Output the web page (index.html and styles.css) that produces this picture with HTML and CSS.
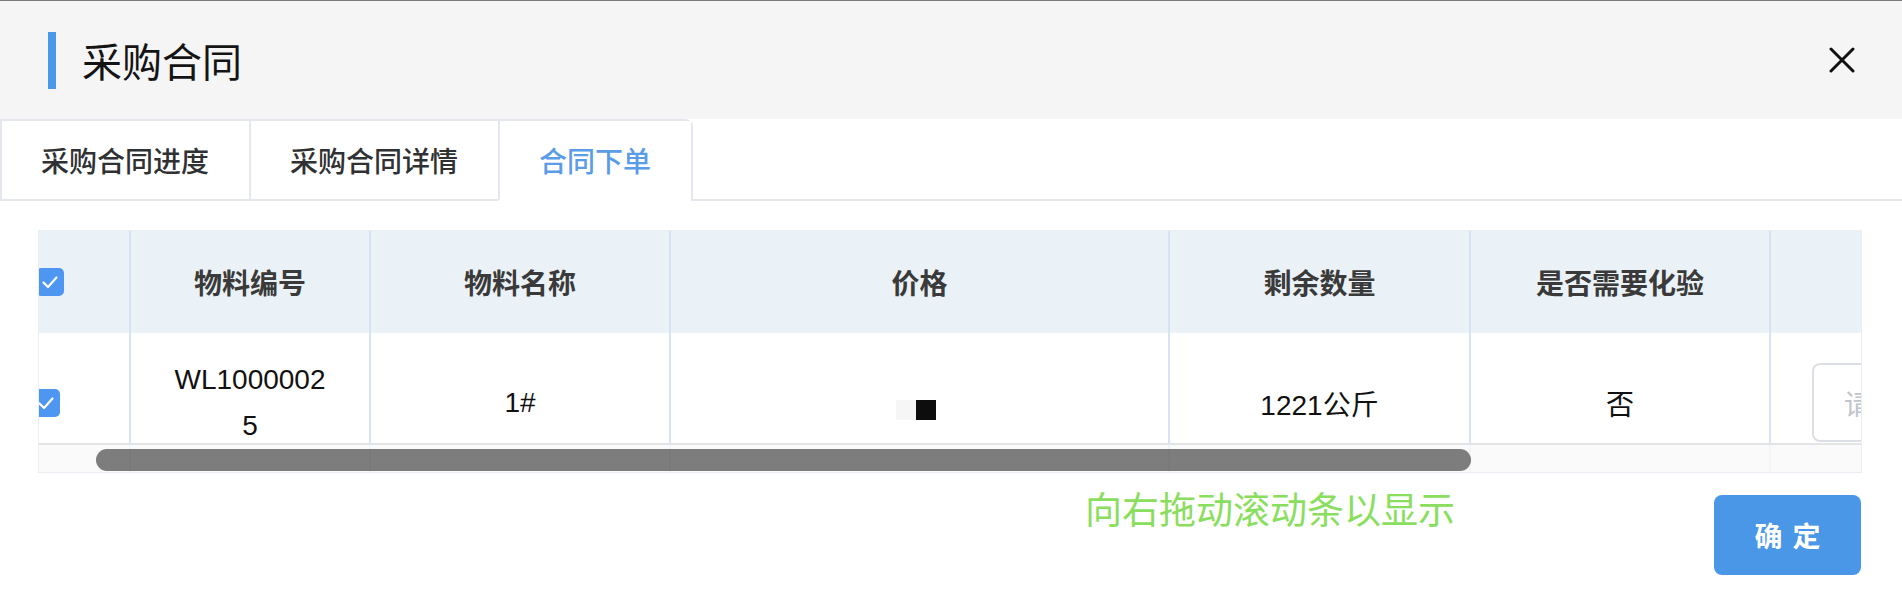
FILE: index.html
```html
<!DOCTYPE html>
<html lang="zh-CN">
<head>
<meta charset="utf-8">
<title>采购合同</title>
<link rel="stylesheet" href="styles.css">
</head>
<body>
<header class="dlg-head">
  <span class="bar"></span>
  <h1 class="title">采购合同</h1>
  <button class="close" aria-label="关闭">
    <svg width="26" height="26" viewBox="0 0 26 26"><path d="M2 2 L24 24 M24 2 L2 24" stroke="#111" stroke-width="3" stroke-linecap="round" fill="none"/></svg>
  </button>
</header>
<nav class="tabs">
  <div class="tab-group">
    <div class="tab">采购合同进度</div>
    <div class="tab">采购合同详情</div>
    <div class="tab active">合同下单</div>
  </div>
</nav>
<section class="table-wrap">
  <div class="grid">
    <div class="th first"><span class="cb cb-head"><svg width="28" height="28" viewBox="0 0 28 28"><path d="M7.5 14.5 L12 19 L20.5 9.5" stroke="#fff" stroke-width="2.2" fill="none" stroke-linecap="round" stroke-linejoin="round"/></svg></span></div>
    <div class="th">物料编号</div>
    <div class="th">物料名称</div>
    <div class="th">价格</div>
    <div class="th">剩余数量</div>
    <div class="th">是否需要化验</div>
    <div class="th"></div>

    <div class="td first"><span class="cb cb-body"><svg width="28" height="28" viewBox="0 0 28 28"><path d="M7.5 14.5 L12 19 L20.5 9.5" stroke="#fff" stroke-width="2.2" fill="none" stroke-linecap="round" stroke-linejoin="round"/></svg></span></div>
    <div class="td"><div class="code">WL10000025</div></div>
    <div class="td">1#</div>
    <div class="td"><span class="pix pix-light"></span><span class="pix pix-dark"></span></div>
    <div class="td">1221公斤</div>
    <div class="td">否</div>
    <div class="td last"><div class="select">请选择</div></div>
  </div>
  <div class="hscroll"><div class="thumb"></div></div>
</section>
<footer class="foot">
  <span class="hint">向右拖动滚动条以显示</span>
  <button class="ok">确定</button>
</footer>
</body>
</html>
```

FILE: styles.css
```css
html, body {
  margin: 0;
  padding: 0;
  background: #fff;
}
body {
  width: 1902px;
  height: 614px;
  overflow: hidden;
  font-family: "Liberation Sans", "Noto Sans CJK SC", sans-serif;
}

/* dialog header */
.dlg-head {
  height: 118px;
  border-top: 1px solid #7a7a7a;
  background: #f5f5f5;
  display: flex;
  align-items: center;
  padding: 0 47px 0 48px;
}
.bar {
  width: 8px;
  height: 57px;
  background: #4a99e9;
}
.title {
  flex: 1;
  margin: 0 0 0 26px;
  font-family: "Noto Sans CJK SC", sans-serif;
  font-size: 40px;
  font-weight: 400;
  line-height: 1;
  color: #141414;
}
.close {
  width: 26px;
  height: 26px;
  padding: 0;
  border: none;
  background: transparent;
  display: flex;
}

/* tabs */
.tabs {
  height: 80px;
  border-bottom: 2px solid #e4e7ed;
  display: flex;
  align-items: flex-start;
}
.tab-group {
  display: flex;
  border: 2px solid #e4e7ed;
  border-bottom: none;
  border-radius: 0 8px 0 0;
}
.tab {
  height: 78px;
  padding: 0 40px 0 39px;
  display: flex;
  align-items: center;
  font-family: "Noto Sans CJK SC", sans-serif;
  font-size: 28px;
  font-weight: 500;
  color: #303133;
  border-bottom: 2px solid transparent;
}
.tab + .tab {
  border-left: 2px solid #e4e7ed;
}
.tab.active {
  color: #5b9ce7;
  background: #fff;
  border-bottom-color: #fff;
}

/* table */
.table-wrap {
  position: relative;
  margin: 29px 40px 0 38px;
  height: 241px;
  border: 1px solid #ebeef5;
  overflow: hidden;
}
.grid {
  display: grid;
  grid-template-columns: 90px 240px 300px 499px 301px 300px 300px;
  grid-template-rows: 102px 139px;
}
.th, .td {
  box-sizing: border-box;
  display: flex;
  align-items: center;
  justify-content: center;
  font-size: 28px;
  white-space: nowrap;
}
.th {
  background: #ebf2f7;
  font-weight: 700;
  color: #3a3a3a;
}
.td {
  background: #fff;
  color: #111;
}
.th + .th, .td + .td {
  border-left: 2px solid #d6e3f2;
}
.first {
  justify-content: flex-start;
}
.cb {
  width: 28px;
  height: 28px;
  flex: none;
  border-radius: 5px;
  background: #4d97f3;
  display: flex;
}
.cb-head { margin-left: -3px; }
.cb-body { margin-left: -7px; }
.code {
  width: 160px;
  white-space: normal;
  word-break: break-all;
  text-align: center;
  line-height: 46px;
}
.pix {
  width: 20px;
  height: 20px;
  margin-top: 14px;
}
.pix-light { background: #f6f6f6; }
.pix-dark { background: #0d0d0d; margin-right: 7px; }
.last {
  justify-content: flex-start;
  padding-left: 41px;
}
.select {
  box-sizing: border-box;
  flex: none;
  width: 240px;
  height: 79px;
  border: 2px solid #dcdfe6;
  border-radius: 8px;
  padding-left: 30px;
  display: flex;
  align-items: center;
  color: #c0c4cc;
}

/* overlay horizontal scrollbar */
.hscroll {
  position: absolute;
  left: 0;
  right: 0;
  bottom: 0;
  height: 27px;
  border-top: 2px solid #e4e4e4;
  background: rgba(249, 249, 249, 0.8);
}
.thumb {
  position: absolute;
  left: 57px;
  top: 4px;
  width: 1375px;
  height: 22px;
  border-radius: 11px;
  background: rgba(0, 0, 0, 0.5);
}

/* footer */
.foot {
  display: flex;
  justify-content: flex-end;
  align-items: flex-start;
  padding: 22px 41px 0 0;
}
.hint {
  margin: -5px 259px 0 0;
  font-family: "Noto Sans CJK SC", sans-serif;
  font-size: 37px;
  line-height: 37px;
  color: #8ade5e;
}
.ok {
  width: 147px;
  height: 80px;
  padding: 0 0 0 10px;
  border: none;
  border-radius: 8px;
  background: #4a97e7;
  color: #fff;
  font-family: "Noto Sans CJK SC", sans-serif;
  font-size: 28px;
  font-weight: 700;
  letter-spacing: 10px;
}
```
